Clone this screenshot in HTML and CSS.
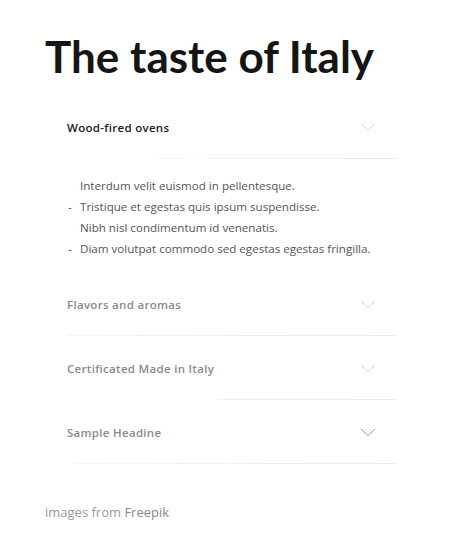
FILE: index.html
```html
<!DOCTYPE html>
<html>
<head>
<meta charset="utf-8">
<link rel="stylesheet" href="styles.css">
</head>
<body>
<main class="page">
  <h1 class="title">The taste of Italy</h1>
  <section class="accordion">
    <div class="item open">
      <div class="head line-a">
        <span class="label">Wood-fired ovens</span>
        <svg class="chev" width="16" height="9" viewBox="0 0 16 9"><path d="M1 1 L8 7.5 L15 1" fill="none" stroke="#d6d6d6" stroke-width="1"/></svg>
      </div>
      <ul class="content">
        <li class="plain">Interdum velit euismod in pellentesque.</li>
        <li>Tristique et egestas quis ipsum suspendisse.</li>
        <li class="plain">Nibh nisl condimentum id venenatis.</li>
        <li>Diam volutpat commodo sed egestas egestas fringilla.</li>
      </ul>
    </div>
    <div class="item">
      <div class="head line-b">
        <span class="label muted">Flavors and aromas</span>
        <svg class="chev" width="16" height="9" viewBox="0 0 16 9"><path d="M1 1 L8 7.5 L15 1" fill="none" stroke="#d6d6d6" stroke-width="1"/></svg>
      </div>
    </div>
    <div class="item">
      <div class="head line-c">
        <span class="label muted">Certificated Made in Italy</span>
        <svg class="chev" width="16" height="9" viewBox="0 0 16 9"><path d="M1 1 L8 7.5 L15 1" fill="none" stroke="#d6d6d6" stroke-width="1"/></svg>
      </div>
    </div>
    <div class="item">
      <div class="head line-d">
        <span class="label muted">Sample Headine</span>
        <svg class="chev" width="16" height="9" viewBox="0 0 16 9"><path d="M1 1 L8 7.5 L15 1" fill="none" stroke="#9a9a9a" stroke-width="1"/></svg>
      </div>
    </div>
  </section>
  <p class="credit">images from <a class="link">Freepik</a></p>
</main>
</body>
</html>
```
FILE: styles.css
```css
html, body {
  margin: 0;
  padding: 0;
  background: #ffffff;
}
.page {
  padding: 30px 0 0 45px;
  width: 413px;
  font-family: "Open Sans", "Noto Sans", sans-serif;
}
.title {
  margin: 0;
  font-family: Lato, "Open Sans", sans-serif;
  font-weight: 700;
  font-size: 44px;
  line-height: 52px;
  color: #151515;
}
.accordion {
  margin: 13px 0 0 22px;
  width: 330px;
}
.head {
  display: flex;
  align-items: center;
  justify-content: space-between;
  padding: 23px 21px 23px 0;
  height: 18px;
  background-repeat: no-repeat;
  background-position: left bottom;
  background-size: 100% 1px;
}
.line-a { background-image: linear-gradient(to right, #fff 0, #fff 25%, #f0f0f0 32%, #fff 38%, #efefef 45%, #ececec 100%); }
.line-b { background-image: linear-gradient(to right, #f3f3f3 0, #ececec 100%); }
.line-c { background-image: linear-gradient(to right, #fff 0, #fff 44%, #eeeeee 48%, #ececec 100%); }
.line-d { background-image: linear-gradient(to right, #fff 0, #f4f4f4 4%, #ececec 100%); }
.label {
  font-size: 11.5px;
  font-weight: 600;
  color: #1a1a1a;
  letter-spacing: 0.3px;
}
.label.muted {
  color: #8a8a8a;
}
.chev {
  display: block;
}
.content {
  list-style: none;
  margin: 0;
  padding: 16px 0 13px 1px;
}
.content li {
  font-size: 11.6px;
  font-weight: 400;
  line-height: 21px;
  color: #555;
  padding-left: 12px;
  position: relative;
}
.content li::before {
  content: "-";
  position: absolute;
  left: 0;
  top: 0;
}
.content li.plain::before {
  content: "";
}
.credit {
  margin: 39px 0 0 0;
  font-size: 13px;
  color: #9a9a9a;
}
.link {
  color: #8a8a8a;
  border-bottom: 1px solid #bdbdbd;
  padding-bottom: 1px;
}
```
